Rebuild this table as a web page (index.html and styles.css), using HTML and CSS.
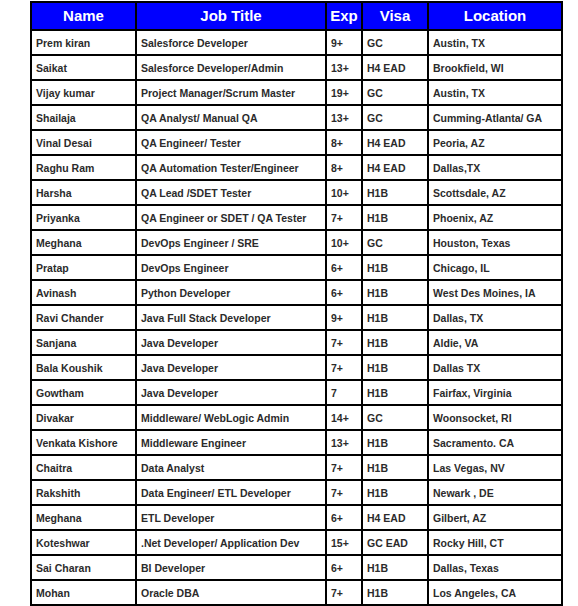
FILE: index.html
```html
<!DOCTYPE html>
<html>
<head>
<meta charset="utf-8">
<link rel="stylesheet" href="styles.css">
</head>
<body>
<div class="wrap">
<table class="grid">
<colgroup>
<col class="c-name"><col class="c-job"><col class="c-exp"><col class="c-visa"><col class="c-loc">
</colgroup>
<thead>
<tr><th>Name</th><th>Job Title</th><th>Exp</th><th>Visa</th><th>Location</th></tr>
</thead>
<tbody>
<tr><td>Prem kiran</td><td>Salesforce Developer</td><td>9+</td><td>GC</td><td>Austin, TX</td></tr>
<tr><td>Saikat</td><td>Salesforce Developer/Admin</td><td>13+</td><td>H4 EAD</td><td>Brookfield, WI</td></tr>
<tr><td>Vijay kumar</td><td>Project Manager/Scrum Master</td><td>19+</td><td>GC</td><td>Austin, TX</td></tr>
<tr><td>Shailaja</td><td>QA Analyst/ Manual QA</td><td>13+</td><td>GC</td><td>Cumming-Atlanta/ GA</td></tr>
<tr><td>Vinal Desai</td><td>QA Engineer/ Tester</td><td>8+</td><td>H4 EAD</td><td>Peoria, AZ</td></tr>
<tr><td>Raghu Ram</td><td>QA Automation Tester/Engineer</td><td>8+</td><td>H4 EAD</td><td>Dallas,TX</td></tr>
<tr><td>Harsha</td><td>QA Lead /SDET Tester</td><td>10+</td><td>H1B</td><td>Scottsdale, AZ</td></tr>
<tr><td>Priyanka</td><td>QA Engineer or SDET / QA Tester</td><td>7+</td><td>H1B</td><td>Phoenix, AZ</td></tr>
<tr><td>Meghana</td><td>DevOps Engineer / SRE</td><td>10+</td><td>GC</td><td>Houston, Texas</td></tr>
<tr><td>Pratap</td><td>DevOps Engineer</td><td>6+</td><td>H1B</td><td>Chicago, IL</td></tr>
<tr><td>Avinash</td><td>Python Developer</td><td>6+</td><td>H1B</td><td>West Des Moines, IA</td></tr>
<tr><td>Ravi Chander</td><td>Java Full Stack Developer</td><td>9+</td><td>H1B</td><td>Dallas, TX</td></tr>
<tr><td>Sanjana</td><td>Java Developer</td><td>7+</td><td>H1B</td><td>Aldie, VA</td></tr>
<tr><td>Bala Koushik</td><td>Java Developer</td><td>7+</td><td>H1B</td><td>Dallas TX</td></tr>
<tr><td>Gowtham</td><td>Java Developer</td><td>7</td><td>H1B</td><td>Fairfax, Virginia</td></tr>
<tr><td>Divakar</td><td>Middleware/ WebLogic Admin</td><td>14+</td><td>GC</td><td>Woonsocket, RI</td></tr>
<tr><td>Venkata Kishore</td><td>Middleware Engineer</td><td>13+</td><td>H1B</td><td>Sacramento. CA</td></tr>
<tr><td>Chaitra</td><td>Data Analyst</td><td>7+</td><td>H1B</td><td>Las Vegas, NV</td></tr>
<tr><td>Rakshith</td><td>Data Engineer/ ETL Developer</td><td>7+</td><td>H1B</td><td>Newark , DE</td></tr>
<tr><td>Meghana</td><td>ETL Developer</td><td>6+</td><td>H4 EAD</td><td>Gilbert, AZ</td></tr>
<tr><td>Koteshwar</td><td>.Net Developer/ Application Dev</td><td>15+</td><td>GC EAD</td><td>Rocky Hill, CT</td></tr>
<tr><td>Sai Charan</td><td>BI Developer</td><td>6+</td><td>H1B</td><td>Dallas, Texas</td></tr>
<tr><td>Mohan</td><td>Oracle DBA</td><td>7+</td><td>H1B</td><td>Los Angeles, CA</td></tr>
</tbody>
</table>
</div>
</body>
</html>
```
FILE: styles.css
```css
html, body {
  margin: 0;
  padding: 0;
  background: #ffffff;
}
.wrap {
  padding: 1px 0 0 30px;
}
.grid {
  border-collapse: collapse;
  table-layout: fixed;
  width: 531px;
  font-family: "Liberation Sans", Arial, sans-serif;
  font-weight: bold;
}
.c-name { width: 105px; }
.c-job { width: 190px; }
.c-exp { width: 36px; }
.c-visa { width: 66px; }
.c-loc { width: 134px; }
.grid th, .grid td {
  border: 2px solid #000;
  padding: 0 0 0 4px;
  white-space: nowrap;
  overflow: hidden;
}
.grid th {
  background: #0000ff;
  color: #ffffff;
  font-size: 15px;
  height: 24px;
  text-align: center;
  padding: 0 0 2px 0;
}
.grid td {
  color: #2b2b2b;
  font-size: 10.5px;
  height: 23px;
  text-align: left;
}
```
